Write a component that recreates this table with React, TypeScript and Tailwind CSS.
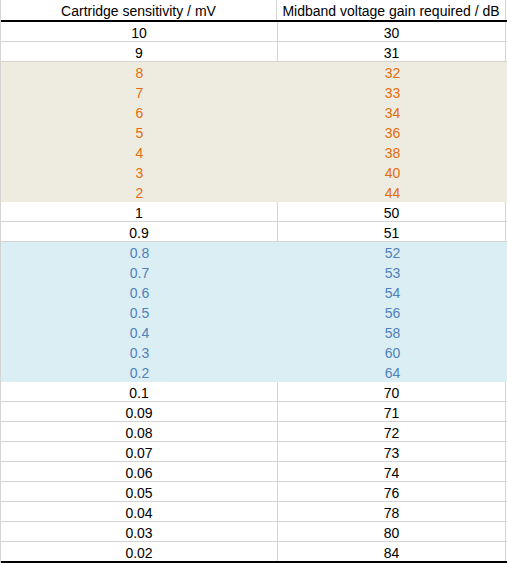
import React from 'react';

type Row = { mv: string; db: string; tone?: 'orange' | 'blue' };

const rows: Row[] = [
  { mv: '10', db: '30' },
  { mv: '9', db: '31' },
  { mv: '8', db: '32', tone: 'orange' },
  { mv: '7', db: '33', tone: 'orange' },
  { mv: '6', db: '34', tone: 'orange' },
  { mv: '5', db: '36', tone: 'orange' },
  { mv: '4', db: '38', tone: 'orange' },
  { mv: '3', db: '40', tone: 'orange' },
  { mv: '2', db: '44', tone: 'orange' },
  { mv: '1', db: '50' },
  { mv: '0.9', db: '51' },
  { mv: '0.8', db: '52', tone: 'blue' },
  { mv: '0.7', db: '53', tone: 'blue' },
  { mv: '0.6', db: '54', tone: 'blue' },
  { mv: '0.5', db: '56', tone: 'blue' },
  { mv: '0.4', db: '58', tone: 'blue' },
  { mv: '0.3', db: '60', tone: 'blue' },
  { mv: '0.2', db: '64', tone: 'blue' },
  { mv: '0.1', db: '70' },
  { mv: '0.09', db: '71' },
  { mv: '0.08', db: '72' },
  { mv: '0.07', db: '73' },
  { mv: '0.06', db: '74' },
  { mv: '0.05', db: '76' },
  { mv: '0.04', db: '78' },
  { mv: '0.03', db: '80' },
  { mv: '0.02', db: '84' },
];

function DataRow({ row, last }: { row: Row; last: boolean }) {
  if (row.tone === 'orange') {
    return (
      <div className="flex h-[20px] bg-[#eeece1] pt-[2px] text-[#e46c0a]">
        <div className="flex w-[277px] items-center justify-center">{row.mv}</div>
        <div className="flex w-[229px] items-center justify-center">{row.db}</div>
      </div>
    );
  }
  if (row.tone === 'blue') {
    return (
      <div className="flex h-[20px] bg-[#daeef3] pt-[2px] text-[#4f81bd]">
        <div className="flex w-[277px] items-center justify-center">{row.mv}</div>
        <div className="flex w-[229px] items-center justify-center">{row.db}</div>
      </div>
    );
  }
  return (
    <div
      className={
        last
          ? 'flex h-[21px] border-b-2 border-black text-black'
          : 'flex h-[20px] border-b border-[#d4d4d4] text-black'
      }
    >
      <div className="flex w-[277px] items-center justify-center border-r border-[#d4d4d4] pt-[2px]">{row.mv}</div>
      <div className="flex w-[228px] items-center justify-center border-r border-[#d4d4d4] pt-[2px]">{row.db}</div>
    </div>
  );
}

export default function App() {
  return (
    <div className="h-[563px] w-[507px] bg-white font-['Liberation_Sans',Arial,sans-serif] text-[14px] leading-[16px]">
      <div className="border-l border-[#d4d4d4]">
        <div className="flex h-[22px] border-b-2 border-black text-black">
          <div className="flex w-[276px] items-center justify-center border-r border-[#d4d4d4] pt-[1px]">
            Cartridge sensitivity / mV
          </div>
          <div className="flex w-[229px] items-center justify-center border-r border-[#d4d4d4] pt-[1px]">
            Midband voltage gain required / dB
          </div>
        </div>
        {rows.map((r, i) => (
          <DataRow key={r.mv} row={r} last={i === rows.length - 1} />
        ))}
      </div>
    </div>
  );
}
